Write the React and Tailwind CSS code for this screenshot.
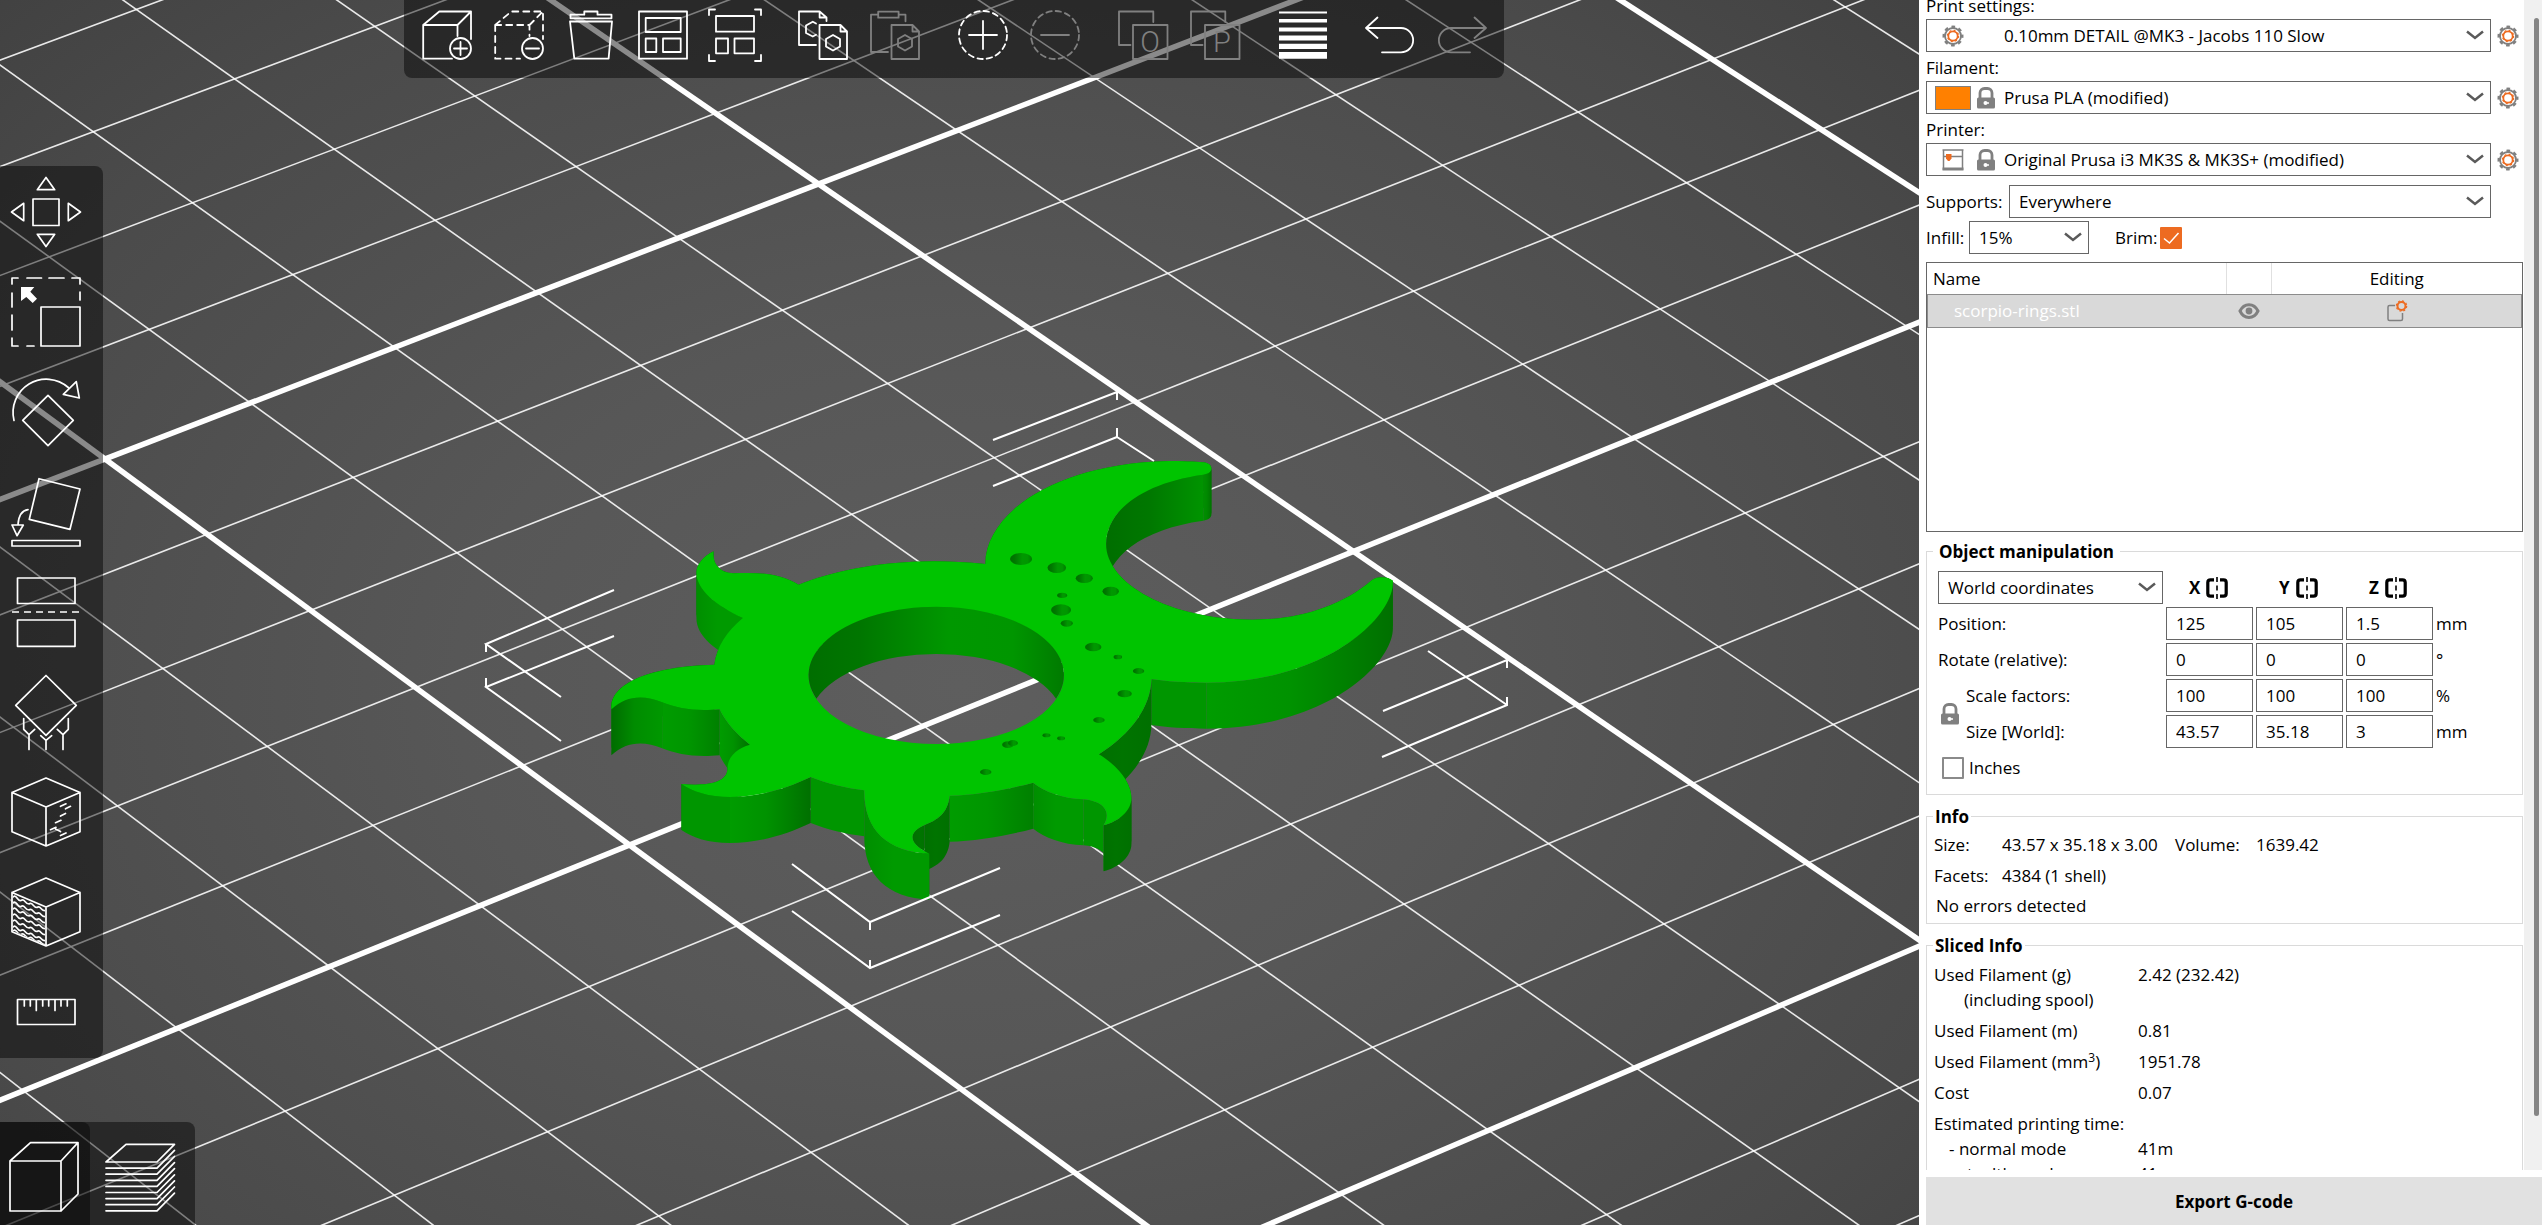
import React from "react";

/* ---------- 3D view ---------- */

// Projects a point of the print bed (in 10 mm cells) to the view.
function project(u, v) {
  const w = 1 - 0.0065 * u + 0.00489 * v;
  return [
    (100.81 * u + 146.71 * v + 105) / w,
    (71.71 * u - 54.1 * v + 459) / w,
  ];
}

const range = (a, b) => Array.from({ length: b - a + 1 }, (_, i) => a + i);

function BedGrid() {
  const line = (from, to, major, key) => {
    const [x1, y1] = project(...from);
    const [x2, y2] = project(...to);
    return (
      <line
        key={key}
        x1={x1}
        y1={y1}
        x2={x2}
        y2={y2}
        stroke="#fff"
        strokeOpacity={major ? 1 : 0.88}
        strokeWidth={major ? 5.5 : 1.6}
      />
    );
  };
  return (
    <g>
      {range(-8, 14).map((v) => line([-12, v], [22, v], v % 5 === 0, "p" + v))}
      {range(-6, 16).map((u) => line([u, -12], [u, 20], u % 5 === 0, "q" + u))}
    </g>
  );
}

// Outline of the part: [control 1, control 2, end, shade, depth order]
const START = [1135, 402];
const OUTLINE = [
  [[1135, 250], [1330, 100], [1650, 93]],
  [[1685, 93], [1720, 95], [1745, 97]],
  [[1760, 99], [1768, 106], [1768, 115]],
  [[1768, 125], [1760, 132], [1745, 134], "cap", 1],
  [[1570, 160], [1473, 245], [1473, 342], "rise", 1],
  [[1473, 460], [1650, 569], [1884, 569]],
  [[2010, 569], [2130, 530], [2215, 452]],
  [[2230, 438], [2260, 438], [2276, 452]],
  [[2282, 560], [2090, 758], [1754, 758], "fall", 1],
  [[1700, 758], [1640, 754], [1600, 747], "flat", 1],
  [[1598, 830], [1545, 910], [1453, 973], "dark", 1],
  [[1510, 1010], [1544, 1060], [1544, 1105], "dark", 2],
  [[1544, 1140], [1510, 1175], [1466, 1186], "dark", 3],
  [[1485, 1155], [1478, 1115], [1410, 1108], "flat", 2],
  [[1350, 1105], [1300, 1085], [1269, 1058], "soft", 2],
  [[1200, 1078], [1110, 1095], [1035, 1097], "dim", 1],
  [[1030, 1150], [1000, 1170], [965, 1185], "dark", 1],
  [[925, 1203], [910, 1235], [978, 1271], "dark", 1],
  [[860, 1265], [795, 1200], [796, 1081], "soft", 2],
  [[745, 1074], [690, 1060], [646, 1041], "flat", 1],
  [[580, 1075], [500, 1101], [420, 1101], "fall", 1],
  [[360, 1101], [315, 1085], [284, 1062], "flat", 1],
  [[350, 1068], [413, 1062], [413, 1015]],
  [[413, 980], [440, 955], [476, 944]],
  [[440, 915], [410, 880], [391, 838], "fall", 1],
  [[320, 845], [275, 835], [230, 817], "dim", 1],
  [[180, 795], [130, 795], [88, 838], "lift", 1],
  [[80, 760], [200, 708], [376, 704]],
  [[383, 650], [410, 605], [456, 564]],
  [[380, 525], [325, 480], [326, 425], "soft", 1],
  [[327, 405], [345, 378], [374, 364]],
  [[370, 400], [390, 429], [430, 430]],
  [[500, 426], [560, 430], [612, 464]],
  [[720, 418], [900, 375], [1135, 402]],
];
const DEPTH = 138;

const SHADES = {
  back: ["#007800", "#007800", "#007800"],
  cap: ["#009000", "#008800", "#007400"],
  rise: ["#006e00", "#007800", "#009400"],
  fall: ["#009c00", "#009200", "#007000"],
  flat: ["#009600", "#009600", "#009600"],
  dark: ["#007000", "#007400", "#007000"],
  soft: ["#008e00", "#009a00", "#009a00"],
  dim: ["#009c00", "#009600", "#008000"],
  lift: ["#006c00", "#008c00", "#009800"],
};

const HOLES = [
  [1235, 387, 31, 18], [1335, 413, 26, 16], [1412, 445, 24, 14],
  [1486, 484, 23, 14], [1350, 496, 14, 8], [1347, 540, 28, 17],
  [1363, 580, 17, 10], [1437, 651, 23, 13], [1506, 681, 12, 7],
  [1564, 723, 16, 9], [1525, 791, 20, 11], [1453, 870, 16, 9],
  [1306, 916, 11, 6], [1347, 925, 11, 6], [1198, 944, 16, 10],
  [1212, 939, 14, 9], [1136, 1026, 16, 9],
];

function Part() {
  const down = ([x, y]) => [x, y + DEPTH];
  let from = START;
  const walls = OUTLINE.map(([c1, c2, to, shade = "back", z = 0], i) => {
    const d = `M${from} C${c1} ${c2} ${to} L${down(to)} C${down(c2)} ${down(c1)} ${down(from)} Z`;
    from = to;
    return { d, shade, z, i };
  }).sort((a, b) => a.z - b.z || a.i - b.i);
  const face =
    `M${START} ` +
    OUTLINE.map(([c1, c2, to]) => `C${c1} ${c2} ${to}`).join(" ") +
    " Z M640 737 A357.5 205 0 1 1 1355 737 A357.5 205 0 1 1 640 737 Z";
  return (
    <g transform="translate(580 430) scale(0.35714 0.33333)">
      <defs>
        {Object.entries(SHADES).map(([name, [a, b, c]]) => (
          <linearGradient key={name} id={"shade-" + name}>
            <stop offset="0" stopColor={a} />
            <stop offset="0.45" stopColor={b} />
            <stop offset="1" stopColor={c} />
          </linearGradient>
        ))}
        <linearGradient id="ring">
          <stop offset="0" stopColor="#006e00" />
          <stop offset="0.2" stopColor="#007600" />
          <stop offset="0.55" stopColor="#009800" />
          <stop offset="0.8" stopColor="#009600" />
          <stop offset="1" stopColor="#007a00" />
        </linearGradient>
      </defs>
      {walls.map((w) => (
        <path key={w.i} d={w.d} fill={`url(#shade-${w.shade})`} />
      ))}
      <path d={face} fill="#00c400" fillRule="evenodd" />
      <path
        d="M662 806 A357.5 205 0 1 1 1333 806 A357.5 205 0 0 0 662 806 Z"
        fill="url(#ring)"
      />
      {HOLES.map(([x, y, rx, ry]) => (
        <ellipse key={x} cx={x} cy={y} rx={rx} ry={ry} fill="url(#ring)" />
      ))}
    </g>
  );
}

function SelectionBox() {
  return (
    <g fill="none" stroke="#fff" strokeWidth="2">
      <path d="M993 440 L1117 392 V400" />
      <path d="M993 486 L1117 437 V428 M1117 437 L1154 461" />
      <path d="M1383 711 L1507 660 V668" />
      <path d="M1382 757 L1507 705 V697 M1507 705 L1428 651" />
      <path d="M792 864 L870 922 L1000 868 M870 922 V930" />
      <path d="M792 911 L870 968 L1000 915 M870 968 V960" />
      <path d="M614 590 L486 644 L561 697 M486 644 V652" />
      <path d="M614 636 L486 687 L561 741 M486 687 V678" />
    </g>
  );
}

function Scene() {
  return (
    <svg
      className="block h-full w-full bg-[radial-gradient(ellipse_75%_85%_at_50%_56%,#5e5e5e_0%,#575757_35%,#4a4a4a_75%,#3f3f3f_100%)]"
      viewBox="0 0 1919 1225"
      preserveAspectRatio="xMidYMid slice"
      role="img"
      aria-label="Print bed with scorpio-rings.stl"
    >
      <BedGrid />
      <Part />
      <SelectionBox />
    </svg>
  );
}

/* ---------- Toolbars ---------- */

const HEX = "M35 25 L42 29 V36.500 L35 40.500 L28 36.500 V29 Z";
const FRONT_DOC = "M21.500 15 H42.500 L49 21.500 V49 H21.500 Z M42.500 15 V21.500 H49";
const UNDO = "M11.500 7.500 L0 18 L11.500 28 M0 18 H35 A12 12 0 0 1 35 42.300 H16";

const TOP_GROUPS = [
  [
    {
      name: "Add",
      art: (
        <>
          <path d="M30 48.700 H1.200 V15 H35.500 V26 M1.200 15 L17.300 1.500 H49 V29 M35.500 15 L49 1.500" />
          <circle cx="38.500" cy="38.500" r="10.500" />
          <path d="M38.500 32 V45 M32 38.500 H45" />
        </>
      ),
    },
    {
      name: "Delete",
      art: (
        <>
          <path
            d="M1.200 15 V48.700 H26 M1.200 15 H35.500 V26 M1.200 15 L17.300 1.500 H49 V29 M35.500 15 L49 1.500"
            strokeDasharray="6 5"
          />
          <circle cx="38.500" cy="38.500" r="10.500" />
          <path d="M32 38.500 H45" />
        </>
      ),
    },
    {
      name: "Delete all",
      art: (
        <>
          <path d="M4.500 4.700 H18.300 V1.500 H31.500 V4.700 H45.500 V8.300 H4.500 Z" />
          <path d="M4 11.500 H46 L42.600 48.700 H8.300 Z" />
        </>
      ),
    },
    {
      name: "Arrange",
      art: (
        <path d="M1 1.500 H49 V48.700 H1 Z M7.700 8 H42.700 V22 H7.700 Z M7.700 28.500 H18.300 V42 H7.700 Z M25 28.500 H42.700 V42 H25 Z" />
      ),
    },
    {
      name: "Arrange selection",
      art: (
        <>
          <path d="M6 6 H44 V21.700 H6 Z M6 28.500 H18 V43.300 H6 Z M24.500 28.500 H44 V43.300 H24.500 Z" />
          <path d="M-1 5 V-0.500 H5 M45 -0.500 H51 V5 M51 45 V51 H45 M5 51 H-1 V45" />
        </>
      ),
    },
  ],
  [
    {
      name: "Copy",
      art: (
        <>
          <path d="M18 35 H1 V1.500 H21.600 L28.500 7.500 V11 M21.600 1.500 V7.500 H28.500" />
          <path d="M18 13.500 L14.800 11.700 L8 15.500 V23 L14.800 26.500 L18 24.800" />
          <path d={FRONT_DOC} />
          <path d={HEX} />
        </>
      ),
    },
    {
      name: "Paste",
      off: true,
      art: (
        <>
          <path d="M8.200 4.700 H1 V42 H18 M8.200 1.700 H28.600 V7.700 H8.200 Z M28.600 4.700 H35.500 V11.300" />
          <path d={FRONT_DOC} />
          <path d={HEX} />
        </>
      ),
    },
  ],
  [
    {
      name: "Add instance",
      art: (
        <>
          <circle cx="25" cy="25" r="24" strokeDasharray="5.420 4" />
          <path d="M25 11 V39 M11 25 H39" />
        </>
      ),
    },
    {
      name: "Remove instance",
      off: true,
      art: (
        <>
          <circle cx="25" cy="25" r="24" strokeDasharray="5.420 4" />
          <path d="M11 25 H39" />
        </>
      ),
    },
  ],
  [
    { name: "Split to objects", off: true, letter: "O" },
    { name: "Split to parts", off: true, letter: "P" },
  ],
  [
    {
      name: "Variable layer height",
      art: (
        <path
          d="M1 1.500 H49 V3.500 H1 Z M1 9 H49 V12.500 H1 Z M1 17.500 H49 V21.500 H1 Z M1 25.500 H49 V30.500 H1 Z M1 33.700 H49 V39 H1 Z M1 42 H49 V48.700 H1 Z"
          fill="currentColor"
          stroke="none"
        />
      ),
    },
  ],
  [
    { name: "Undo", art: <path d={UNDO} /> },
    {
      name: "Redo",
      off: true,
      art: <path d={UNDO} transform="matrix(-1 0 0 1 48 0)" />,
    },
  ],
];

function TopToolbar() {
  return (
    <div className="absolute left-[404px] top-0 flex h-[78px] gap-[38px] rounded-b-lg bg-black/[0.46] pl-[18px] pr-4 pt-[10px]">
      {TOP_GROUPS.map((group) => (
        <div key={group[0].name} className="flex gap-[22px]">
          {group.map(({ name, art, off, letter }) => (
            <button
              key={name}
              aria-label={name}
              disabled={off}
              className={`h-[50px] w-[50px] ${off ? "text-[#808080]" : "text-white"}`}
            >
              <svg
                viewBox="0 0 50 50"
                className="h-full w-full overflow-visible"
                fill="none"
                stroke="currentColor"
                strokeWidth="1.8"
                strokeLinejoin="round"
                strokeLinecap="round"
              >
                {art}
                {letter && (
                  <>
                    <path d="M12.500 35 H1 V1.500 H35.300 V12 M15 15 H49.500 V49 H15 Z" />
                    <text
                      x="32"
                      y="42"
                      textAnchor="middle"
                      fill="currentColor"
                      stroke="none"
                      className="font-['Roboto',sans-serif] text-[29px] font-light"
                    >
                      {letter}
                    </text>
                  </>
                )}
              </svg>
            </button>
          ))}
        </div>
      ))}
    </div>
  );
}

const CUBE =
  "M35 1 L69 15.500 V54.700 L35 69 L1 54.700 V15.500 Z M1 15.500 L35 30 L69 15.500 M35 30 V69";

const wave = (y) =>
  `M2 ${y} q2 -2 4 1 t4 2.500 q2 -1.500 4 1 t4 2.500 q2 -1.500 4 1 t4 2.500 q2 -1.500 4 1 t4 2`;

const LEFT_TOOLS = [
  {
    name: "Move",
    art: (
      <path d="M22 22 H48 V48.500 H22 Z M35 0.500 L26.300 12.700 H43.700 Z M35 69.500 L26.300 57.300 H43.700 Z M0.500 35 L12.700 26.300 V43.700 Z M69.500 35 L57.300 26.300 V43.700 Z" />
    ),
  },
  {
    name: "Scale",
    art: (
      <>
        <path d="M1 7 V1 H7 M16 1 H30.500 M38 1 H53 M61 1 H69 V7 M69 15 V23 M1 16 V30 M1 38 V53 M1 61 V69 H7 M16 69 H23" />
        <path d="M30 30 H69 V69 H30 Z" />
        <path
          d="M10 10 H23.300 L19.300 14.700 L26 21.700 L21.700 26 L15.300 20 L10 24 Z"
          fill="currentColor"
          stroke="none"
        />
      </>
    ),
  },
  {
    name: "Rotate",
    art: (
      <path d="M3 43.500 A33.300 33.300 0 0 1 57.300 10.500 M65.300 4.700 L52.300 17.300 L68.300 21 Z M37 18.300 L62.300 43.300 L37 68.700 L11.700 43.300 Z" />
    ),
  },
  {
    name: "Place on face",
    art: (
      <path d="M28 1.700 L69 12 L59 52.300 L18.300 42.300 Z M17 32.700 Q8 34 7 47.500 M1 48 H12.300 L6 58.700 Z M1 63.500 H69 V69 H1 Z" />
    ),
  },
  {
    name: "Cut",
    art: (
      <>
        <path d="M6.500 1 H64 V26.500 H6.500 Z M6.500 43 H64 V69.300 H6.500 Z" />
        <path d="M1 35 H69" strokeDasharray="7 5" strokeLinecap="butt" />
      </>
    ),
  },
  {
    name: "Paint-on supports",
    art: (
      <path d="M35 -1.500 L65.300 28.300 L35 58.300 L4.700 28.300 Z M12.700 41.500 V52.300 L18 57.700 V72.500 M18 57.700 L23.700 52.300 M57.300 41.500 V52.300 L52 57.700 V72.500 M52 57.700 L46.300 52.300 M29.700 58.700 L35 63.300 L40.700 58.700 M35 63.300 V72.500" />
    ),
  },
  {
    name: "Seam painting",
    art: (
      <path
        d={
          CUBE +
          " M49.500 29.300 L55 26.800 M54.500 31.800 L59.500 29.300 M49.500 39 L54.500 36.500 M44.500 45.700 L50 43.300 M39.500 52.700 L45 50.300 M44.500 52 L49.500 54.500 M49.500 58.500 L55 56"
        }
      />
    ),
  },
  {
    name: "Multimaterial painting",
    art: (
      <>
        <path d={CUBE} />
        <path d={[20, 26, 32, 38, 44, 50, 54].map(wave).join(" ")} clipPath="url(#left-face)" />
        <clipPath id="left-face">
          <path d="M2 17 L34 31 V68 L2 54 Z" />
        </clipPath>
      </>
    ),
  },
  {
    name: "Measure",
    art: (
      <path d="M6.500 22.500 H64 V47.500 H6.500 Z M13.300 23 V29 M19.300 23 V29 M25.300 23 V33.500 M31.700 23 V29 M37.700 23 V29 M44 23 V33.500 M50 23 V29 M56.300 23 V29" />
    ),
  },
];

function ToolIcon({ children }) {
  return (
    <svg
      viewBox="0 0 70 70"
      className="h-full w-full overflow-visible"
      fill="none"
      stroke="currentColor"
      strokeWidth="1.7"
      strokeLinejoin="round"
      strokeLinecap="round"
    >
      {children}
    </svg>
  );
}

function LeftToolbar() {
  return (
    <div className="absolute left-0 top-[166px] flex flex-col gap-[30px] rounded-r-lg bg-black/[0.46] py-[11px] pl-[11px] pr-[22px] text-white">
      {LEFT_TOOLS.map(({ name, art }) => (
        <button key={name} aria-label={name} className="h-[70px] w-[70px]">
          <ToolIcon>{art}</ToolIcon>
        </button>
      ))}
    </div>
  );
}

function ViewSwitch() {
  return (
    <div className="absolute bottom-0 left-0 flex h-[103px] rounded-tr-lg bg-black/[0.46] text-white">
      <button aria-label="3D editor view" className="h-full rounded-tr-lg bg-black/[0.42] px-[10px] pb-[13px] pt-5">
        <span className="block h-[70px] w-[70px]">
          <ToolIcon>
            <path d="M0 19 H51 V69 H0 Z M0 19 L20.500 0.700 H68 V52 L51 69 M51 19 L68 0.700" />
          </ToolIcon>
        </span>
      </button>
      <button aria-label="Preview" className="h-full pb-[13px] pl-[15px] pr-5 pt-5">
        <span className="block h-[70px] w-[70px]">
          <ToolIcon>
            <path d="M1 20 L21 2.300 H69.500 L52 20 Z" />
            {range(1, 8).map((i) => (
              <path key={i} d={`M1 ${20 + i * 6.1} H52 L69.500 ${2.3 + i * 6.1}`} />
            ))}
          </ToolIcon>
        </span>
      </button>
    </div>
  );
}

/* ---------- Sidebar ---------- */

function Gear() {
  return (
    <svg viewBox="0 0 22 22" className="h-[22px] w-[22px]" fill="none">
      <circle cx="11" cy="11" r="8" stroke="#808080" strokeWidth="1.800" />
      <circle cx="11" cy="11" r="9.200" stroke="#808080" strokeWidth="2.600" strokeDasharray="3.600 3.626" strokeDashoffset="1.800" />
      <circle cx="11" cy="11" r="4.700" stroke="#ed6b21" strokeWidth="1.800" />
      <circle cx="11" cy="11" r="5.600" stroke="#ed6b21" strokeWidth="1.200" strokeDasharray="2 2.398" />
    </svg>
  );
}

function Lock() {
  return (
    <svg viewBox="0 0 18 22" className="h-[22px] w-[18px]" fill="none">
      <path d="M3 11 V6 A4.500 4.500 0 0 1 7.500 1.500 H10.500 A4.500 4.500 0 0 1 15 6 V11" stroke="#808080" strokeWidth="2.800" />
      <rect x="0" y="10.500" width="18" height="11" rx="1.500" fill="#808080" />
      <circle cx="8.500" cy="16" r="2" fill="#fff" />
      <path d="M9 16 H12" stroke="#fff" strokeWidth="1.500" />
    </svg>
  );
}

function PrinterIcon() {
  return (
    <svg viewBox="0 0 22 22" className="h-[22px] w-[22px]" fill="none">
      <path d="M0.500 1 H21.500 M1.500 1 V21 M20.500 1 V21 M1 7.500 H21" stroke="#808080" strokeWidth="1.500" />
      <path d="M0.500 18.500 H21.500 V21.500 H0.500 Z" fill="#808080" />
      <path d="M4 5 H9.500 V9.500 L7.500 12 H6 L4 9.500 Z" fill="#ed6b21" />
    </svg>
  );
}

function Select({ label, options, icons, className, text = "pl-[9px]" }) {
  return (
    <div className={`relative h-[33px] ${className}`}>
      <select
        aria-label={label}
        className={`h-full w-full appearance-none border border-[#666] bg-white pr-8 ${text}`}
      >
        {options.map((o) => (
          <option key={o}>{o}</option>
        ))}
      </select>
      {icons && (
        <span className="pointer-events-none absolute inset-y-0 left-[9px] flex items-center gap-[6px]">
          {icons}
        </span>
      )}
      <svg
        viewBox="0 0 18 10"
        className="pointer-events-none absolute right-[7px] top-[11px] h-[10px] w-[18px]"
        fill="none"
        stroke="#5a5a5a"
        strokeWidth="2.500"
      >
        <path d="M1 1.500 L9 8 L17 1.500" />
      </svg>
    </div>
  );
}

function Preset({ label, value, icons }) {
  return (
    <div>
      <div className="pt-[2px] leading-[27px]">{label}:</div>
      <div className="flex items-center gap-[6px]">
        <Select label={label} options={[value]} icons={icons} text="pl-[77px]" className="flex-1" />
        <button aria-label={`Edit ${label}`} className="w-[26px]">
          <Gear />
        </button>
      </div>
    </div>
  );
}

function ObjectList() {
  return (
    <div className="mt-2 h-[270px] border border-[#666]">
      <table className="w-full table-fixed border-collapse">
        <colgroup>
          <col />
          <col className="w-[45px]" />
          <col className="w-[251px]" />
        </colgroup>
        <thead>
          <tr className="h-[31px]">
            <th className="pl-[6px] text-left font-normal">Name</th>
            <th aria-label="Visible" className="border-x border-[#e0e0e0]" />
            <th className="font-normal">Editing</th>
          </tr>
        </thead>
        <tbody>
          <tr className="h-[34px] bg-[#d9d9d9] text-white outline outline-1 -outline-offset-1 outline-[#8c8c8c]">
            <td className="pl-[27px]">scorpio-rings.stl</td>
            <td>
              <button aria-label="Toggle visibility" className="mx-auto block">
                <svg viewBox="0 0 22 16" className="h-4 w-[22px]" fill="none" stroke="#808080">
                  <path d="M2 8 C6 -0.500 16 -0.500 20 8 C16 16.500 6 16.500 2 8 Z" strokeWidth="3" />
                  <circle cx="11" cy="8" r="3.400" fill="#808080" stroke="none" />
                </svg>
              </button>
            </td>
            <td>
              <button aria-label="Edit object settings" className="mx-auto block">
                <svg viewBox="0 0 22 22" className="h-[22px] w-[22px]" fill="none">
                  <path d="M9 5.500 H3.500 A1.500 1.500 0 0 0 2 7 V19 A1.500 1.500 0 0 0 3.500 20.500 H15 A1.500 1.500 0 0 0 16.500 19 V13" stroke="#808080" strokeWidth="1.500" />
                  <circle cx="15.500" cy="6" r="4" stroke="#ed6b21" strokeWidth="2" />
                  <circle cx="15.500" cy="6" r="5.200" stroke="#ed6b21" strokeWidth="1.200" strokeDasharray="2 2.080" />
                </svg>
              </button>
            </td>
          </tr>
        </tbody>
      </table>
    </div>
  );
}

function MirrorIcon() {
  return (
    <svg viewBox="0 0 22 22" className="h-[22px] w-[22px]" fill="none" stroke="#000">
      <path d="M8 2.800 H4.500 Q1.800 2.800 1.800 5.500 V16.500 Q1.800 19.200 4.500 19.200 H8 M14 2.800 H17.500 Q20.200 2.800 20.200 5.500 V16.500 Q20.200 19.200 17.500 19.200 H14" strokeWidth="3.200" />
      <path d="M11 0 V5 M11 8.500 V13.500 M11 17 V22" strokeWidth="1.600" />
    </svg>
  );
}

function AxisInputs({ label, values, unit }) {
  return (
    <>
      {values.map((value, i) => (
        <input
          key={i}
          aria-label={`${label} ${"XYZ"[i]}`}
          defaultValue={value}
          className="h-[33px] w-full border border-[#666] bg-white pl-[9px]"
        />
      ))}
      <span className="leading-[33px]">{unit}</span>
    </>
  );
}

function Group({ title, legend, className, children }) {
  return (
    <fieldset className={`border border-[#dadada] ${className}`}>
      <legend className={`h-5 font-bold leading-[22px] ${legend}`}>{title}</legend>
      {children}
    </fieldset>
  );
}

function ObjectManipulation() {
  return (
    <Group title="Object manipulation" legend="-ml-[5px] px-[6px]" className="mt-[9px] pb-[15px] pl-[11px] pt-[10px]">
      <div className="grid grid-cols-[225px_87px_87px_87px_auto] gap-[3px]">
        <Select label="Coordinates" options={["World coordinates"]} />
        {["X", "Y", "Z"].map((axis) => (
          <div key={axis} className="flex items-center gap-[6px] pl-[23px] font-bold">
            {axis}
            <button aria-label={`Mirror along ${axis}`}>
              <MirrorIcon />
            </button>
          </div>
        ))}
        <span />
        <span className="leading-[33px]">Position:</span>
        <AxisInputs label="Position" values={["125", "105", "1.5"]} unit="mm" />
        <span className="leading-[33px]">Rotate (relative):</span>
        <AxisInputs label="Rotate" values={["0", "0", "0"]} unit="°" />
        <div className="row-span-2 flex items-center gap-[7px] pl-[3px]">
          <button aria-label="Lock scaling ratio">
            <Lock />
          </button>
          <div className="flex flex-col gap-[3px] leading-[33px]">
            <span>Scale factors:</span>
            <span>Size [World]:</span>
          </div>
        </div>
        <AxisInputs label="Scale factors" values={["100", "100", "100"]} unit="%" />
        <AxisInputs label="Size" values={["43.57", "35.18", "3"]} unit="mm" />
      </div>
      <label className="mt-[9px] flex h-[22px] items-center gap-[5px] pl-1">
        <input type="checkbox" className="h-[22px] w-[22px] appearance-none rounded-[1px] border-2 border-[#8a8a8a]" />
        Inches
      </label>
    </Group>
  );
}

const SLICED = [
  ["Used Filament (g)", "2.42 (232.42)", "(including spool)"],
  ["Used Filament (m)", "0.81"],
  [
    <>
      Used Filament (mm<sup className="text-[12px] leading-none">3</sup>)
    </>,
    "1951.78",
  ],
  ["Cost", "0.07"],
];

function Sidebar() {
  return (
    <aside className="flex h-full w-[623px] shrink-0 flex-col bg-white pl-[7px]">
      <div className="flex min-h-0 flex-1">
        <div className="min-w-0 flex-1 overflow-hidden">
          <div className="-mt-[10px]">
            <Preset
              label="Print settings"
              value="0.10mm DETAIL @MK3 - Jacobs 110 Slow"
              icons={
                <span className="pl-[7px]">
                  <Gear />
                </span>
              }
            />
            <Preset
              label="Filament"
              value="Prusa PLA (modified)"
              icons={
                <>
                  <span className="h-6 w-9 border border-[#808080] bg-[#ff8000]" />
                  <Lock />
                </>
              }
            />
            <Preset
              label="Printer"
              value="Original Prusa i3 MK3S & MK3S+ (modified)"
              icons={
                <>
                  <span className="w-9 pl-[7px]">
                    <PrinterIcon />
                  </span>
                  <Lock />
                </>
              }
            />
            <div className="mr-8 mt-[9px] flex items-center">
              <span className="w-[83px]">Supports:</span>
              <Select label="Supports" options={["Everywhere"]} className="flex-1" />
            </div>
            <div className="mt-[3px] flex items-center">
              <span className="w-[43px]">Infill:</span>
              <Select label="Infill" options={["15%"]} className="w-[120px]" />
              <label className="ml-[26px] flex items-center gap-[3px]">
                Brim:
                <span className="relative h-[22px] w-[22px]">
                  <input type="checkbox" defaultChecked className="block h-full w-full appearance-none rounded-[1px] bg-[#ed6b21]" />
                  <svg viewBox="0 0 22 22" className="pointer-events-none absolute inset-0 h-full w-full" fill="none" stroke="#fff" strokeWidth="1.500">
                    <path d="M4 11.500 L9.500 16 L18.500 6" />
                  </svg>
                </span>
              </label>
            </div>
            <ObjectList />
            <ObjectManipulation />
            <Group title="Info" legend="-ml-px px-[2px]" className="mt-[11px] pb-[3px] pl-[7px]">
              <div className="grid grid-cols-[68px_173px_81px_auto] pt-[3px] leading-[31px]">
                <span>Size:</span>
                <span>43.57 x 35.18 x 3.00</span>
                <span>Volume:</span>
                <span>1639.42</span>
                <span>Facets:</span>
                <span>4384 (1 shell)</span>
              </div>
              <div className="pl-[2px] leading-[29px]">No errors detected</div>
            </Group>
            <Group title="Sliced Info" legend="-ml-px px-[2px]" className="mt-[11px] pb-4 pl-[7px]">
              <div className="flex flex-col gap-[6px] pt-[7px] leading-[25px]">
                {SLICED.map(([name, value, note], i) => (
                  <div key={i} className="grid grid-cols-[204px_auto]">
                    <span>{name}</span>
                    <span>{value}</span>
                    {note && <span className="pl-[30px]">{note}</span>}
                  </div>
                ))}
                <div className="grid grid-cols-[204px_auto]">
                  <span className="col-span-2">Estimated printing time:</span>
                  <span className="pl-[15px]">- normal mode</span>
                  <span>41m</span>
                  <span className="pl-[15px]">- stealth mode</span>
                  <span>41m</span>
                </div>
              </div>
            </Group>
          </div>
        </div>
        <div className="ml-px w-[18px] bg-[#f0f0f0] pb-[54px] pl-[10px] pt-[18px]">
          <div className="h-full w-[5px] rounded-full bg-[#858585]" />
        </div>
      </div>
      <button className="mt-[7px] h-12 shrink-0 bg-[#e1e1e1] pt-[2px] font-bold">Export G-code</button>
    </aside>
  );
}

export default function App() {
  return (
    <div className="flex h-screen overflow-hidden font-['Open_Sans','Noto_Sans',sans-serif] text-[17px] text-black">
      <main className="relative min-w-0 flex-1">
        <Scene />
        <TopToolbar />
        <LeftToolbar />
        <ViewSwitch />
      </main>
      <Sidebar />
    </div>
  );
}
